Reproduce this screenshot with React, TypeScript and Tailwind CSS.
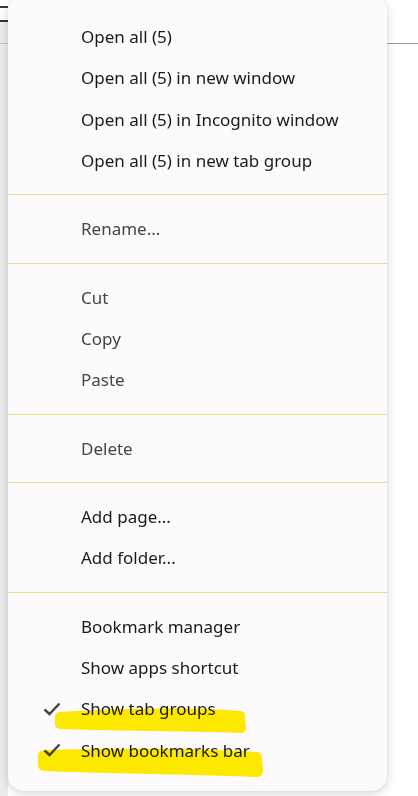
import React from "react";

type Item = { label: string; muted?: boolean; checked?: boolean };

// groups of menu entries, a separator goes between each
const groups: Item[][] = [
  [
    { label: "Open all (5)" },
    { label: "Open all (5) in new window" },
    { label: "Open all (5) in Incognito window" },
    { label: "Open all (5) in new tab group" },
  ],
  [{ label: "Rename...", muted: true }],
  [
    { label: "Cut", muted: true },
    { label: "Copy", muted: true },
    { label: "Paste", muted: true },
  ],
  [{ label: "Delete", muted: true }],
  [{ label: "Add page..." }, { label: "Add folder..." }],
  [
    { label: "Bookmark manager" },
    { label: "Show apps shortcut" },
    { label: "Show tab groups", checked: true },
    { label: "Show bookmarks bar", checked: true },
  ],
];

const Check = () => (
  <svg width="18" height="14" viewBox="0 0 18 14" className="shrink-0">
    <path d="M1.5 7.5 L6.5 12 L16.5 1.5" fill="none" stroke="#454545" strokeWidth="2.4" />
  </svg>
);

export default function App() {
  return (
    <div
      className="relative w-[418px] h-[796px] overflow-hidden bg-white flex"
      style={{ fontFamily: '"Noto Sans", "Open Sans", sans-serif' }}
    >
      {/* page behind the menu, left edge */}
      <div className="w-[8px] shrink-0 flex flex-col">
        <div className="h-[6px]" />
        <div className="h-[2px] bg-[#3a3a3a]" />
        <div className="h-[12px]" />
        <div className="h-[2px] bg-[#333]" />
        <div className="h-[21px] bg-[#ececec]" />
        <div className="h-px bg-[#c8c8c8]" />
        <div className="flex-1 bg-[#ececec]" />
      </div>

      {/* context menu */}
      <div className="relative z-10 w-[379px] shrink-0 self-start -mt-1 h-[795px] rounded-2xl bg-[#fdfafd] pt-5 pb-5 shadow-[0_2px_10px_rgba(0,0,0,0.18)]">
        {groups.map((group, gi) => (
          <div key={gi}>
            {gi > 0 && <div className="my-[13px] h-px bg-[#dfe28c]" />}
            {group.map((item) => (
              <div key={item.label} className="h-[41.33px] flex items-center pl-[35px]">
                <div className="w-[38px] shrink-0 flex">{item.checked && <Check />}</div>
                <span
                  className={
                    "text-[17px] " + (item.muted ? "text-[#454545]" : "text-[#1a1a1a]")
                  }
                >
                  {item.label}
                </span>
              </div>
            ))}
          </div>
        ))}
      </div>

      {/* page behind the menu, right edge */}
      <div className="flex-1 flex flex-col">
        <div className="h-[43px]" />
        <div className="h-px bg-[#9a9a9a]" />
      </div>

      {/* highlighter marks drawn over the screenshot */}
      <svg className="absolute inset-0 z-20 mix-blend-multiply pointer-events-none" width="418" height="796">
        <path
          d="M60 717 C120 713 200 712 240 716 L241 728 C200 726 120 726 60 724 Z"
          fill="#ffee00"
          stroke="#ffee00"
          strokeWidth="10"
          strokeLinejoin="round"
        />
        <path
          d="M44 756 C110 754 200 754 256 758 L257 771 C200 768 110 768 44 765 Z"
          fill="#ffee00"
          stroke="#ffee00"
          strokeWidth="12"
          strokeLinejoin="round"
        />
      </svg>
    </div>
  );
}
